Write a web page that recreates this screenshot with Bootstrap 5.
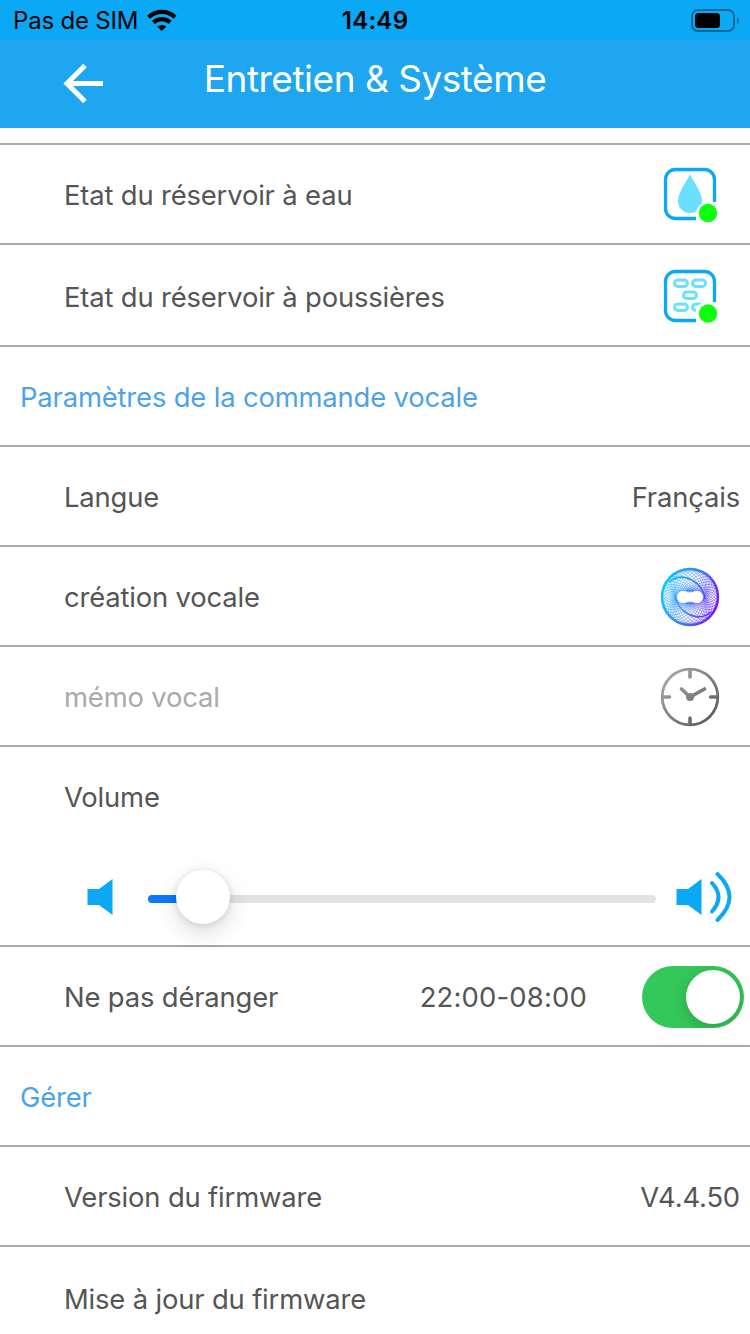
<!DOCTYPE html>
<html lang="fr">
<head>
    <meta charset="UTF-8">
    <meta name="viewport" content="width=device-width, initial-scale=1.0">
    <title>Entretien &amp; Système</title>
    <link href="https://cdn.jsdelivr.net/npm/bootstrap@5.3.3/dist/css/bootstrap.min.css" rel="stylesheet">
    <script src="https://cdn.jsdelivr.net/npm/bootstrap@5.3.3/dist/js/bootstrap.bundle.min.js"></script>
    <style>
        body { font-family: Inter, "Liberation Sans", sans-serif; font-size: 27.4px; line-height: 36px; letter-spacing: -.16px; color: #555; height: 1334px; overflow: hidden; }
        svg { display: block; flex: none; }
        .status-bar { height: 40px; background: #0ba8f6; color: #000; font-size: 24px; letter-spacing: -.2px; padding: 2px 11px 0 13px; }
        .status-bar .clock { font-weight: 600; letter-spacing: .3px; margin: 0 1px 0 -1px; }
        .title-bar { height: 88px; background: #1ea7f0; color: #fff; padding: 0 60px; }
        .title-bar h1 { font-size: 37px; font-weight: 400; letter-spacing: -.48px; margin: 0; padding-bottom: 9px; }
        .gap-strip { height: 17px; border-bottom: 2px solid #a9a9a9; }
        .setting { height: 100px; border: solid #a9a9a9; border-width: 0 0 2px; padding: 2px 10px 0 64px; color: inherit; }
        .setting.tall { height: 102px; padding-top: 4px; }
        .setting.section { padding-left: 20px; color: #4ca3e8; }
        .setting > span { padding-bottom: 1px; }
        .setting.off > span { color: #aaa; }
        .setting .hours { letter-spacing: .2px; }
        .setting.volume { height: 200px; padding: 0; }
        .volume .caption { height: 100px; padding: 0 0 0 64px; }
        .volume .controls { height: 98px; padding: 0 16px 0 86px; }
        .volume svg { margin-top: 2px; }
        .tile, .disc { margin-right: 20px; }
        .track { width: 508px; height: 8px; border-radius: 4px; background: #e3e3e5; margin: 5px 20px 0 34px; }
        .track .fill { height: 8px; border-radius: 4px; background: #0a7aff; }
        .track .thumb { width: 54px; height: 54px; top: -25px; background: #fff; box-shadow: 0 1px 6px rgba(0,0,0,.12), 0 8px 24px rgba(0,0,0,.15); }
        .toggle { width: 102px; height: 62px; border-radius: 31px; background: #34c85a; padding: 4px; overflow: hidden; margin: 0 -4px 0 55px; }
        .toggle .knob { width: 54px; height: 54px; background: #fff; box-shadow: 0 4px 16px rgba(0,0,0,.2); }
    </style>
</head>
<body class="bg-white">
<div class="status-bar d-flex align-items-center">
    <div class="col d-flex align-items-center">
        <span>Pas de SIM</span>
        <svg class="ms-2" width="32" height="24" viewBox="0 0 32 24">
            <g fill="none" stroke="#000" stroke-width="4.2">
                <path d="M2.6 8.3a19 19 0 0 1 26.4 0"/>
                <path d="M7.4 13.5a12 12 0 0 1 16.8 0"/>
            </g>
            <path d="M11.2 17.6a7 7 0 0 1 9.2 0L15.8 22z"/>
        </svg>
    </div>
    <div class="clock">14:49</div>
    <div class="col d-flex justify-content-end">
        <svg width="48" height="24" viewBox="0 0 48 24">
            <rect x="1" y="1" width="42" height="21" rx="6" fill="none" stroke="#07699a" stroke-width="2"/>
            <rect x="4" y="4" width="25" height="15" rx="3.5"/>
            <path d="M46 8v7q2-1 2-3.500t-2-3.500z" fill="#07699a"/>
        </svg>
    </div>
</div>
<div class="title-bar d-flex align-items-center">
    <div class="col">
        <svg width="44" height="44" viewBox="0 0 44 44" fill="none" stroke="#fff" stroke-width="5">
            <path d="M25 3.500 7 21.500l18 18M7 21.500h36"/>
        </svg>
    </div>
    <h1 class="text-nowrap">Entretien &amp; Système</h1>
    <div class="col"></div>
</div>
<div class="gap-strip"></div>

<div class="list-group rounded-0">
    <div class="list-group-item setting d-flex align-items-center">
        <span class="me-auto">Etat du réservoir à eau</span>
        <svg class="tile" width="60" height="60" viewBox="0 0 60 60">
            <rect x="5.500" y="4.500" width="49" height="49" rx="10" fill="none" stroke="#0ba8f6" stroke-width="3.300"/>
            <path d="M30 9C26 18 18 27 18 36a12 12 0 0 0 24 0C42 27 34 18 30 9z" fill="#69e0ff"/>
            <path d="M60 37H48a12 12 0 0 0-12 12v11h24z" fill="#fff"/>
            <circle cx="48" cy="48" r="9.200" fill="#0dff0d"/>
        </svg>
    </div>
    <div class="list-group-item setting tall d-flex align-items-center">
        <span class="me-auto">Etat du réservoir à poussières</span>
        <svg class="tile" width="60" height="60" viewBox="0 0 60 60">
            <rect x="5.500" y="4.500" width="49" height="49" rx="10" fill="none" stroke="#0ba8f6" stroke-width="3.300"/>
            <g fill="none" stroke="#69e0ff" stroke-width="3">
                <rect x="14.500" y="13" width="13" height="6.500" rx="3.200"/>
                <rect x="32.500" y="13" width="13" height="6.500" rx="3.200"/>
                <rect x="23.500" y="25" width="13" height="6.500" rx="3.200"/>
                <rect x="14.500" y="37" width="13" height="6.500" rx="3.200"/>
                <rect x="32.500" y="37" width="13" height="6.500" rx="3.200"/>
            </g>
            <path d="M60 35H46a10 10 0 0 0-10 12v13h24z" fill="#fff"/>
            <circle cx="48" cy="46.500" r="9.200" fill="#0dff0d"/>
        </svg>
    </div>
    <div class="list-group-item setting section d-flex align-items-center">
        <span>Paramètres de la commande vocale</span>
    </div>
    <div class="list-group-item setting d-flex align-items-center">
        <span class="me-auto">Langue</span>
        <span>Français</span>
    </div>
    <div class="list-group-item setting d-flex align-items-center">
        <span class="me-auto">création vocale</span>
        <svg class="disc" width="60" height="60" viewBox="-30 -30 60 60" fill="none" stroke="url(#voiceGrad)">
            <defs>
                <linearGradient id="voiceGrad" gradientUnits="userSpaceOnUse" x1="-28" y1="-10" x2="28" y2="10">
                    <stop offset="0" stop-color="#12c4ff"/>
                    <stop offset=".5" stop-color="#3b80f5"/>
                    <stop offset="1" stop-color="#7a14f5"/>
                </linearGradient>
            </defs>
            <path id="swirl" stroke-width=".5"/>
            <circle r="28" stroke-width="2.400"/>
            <path d="M-21-15C-6-27 13-14 15 2M21 15C6 27-13 14-15-2" stroke-width="1.500"/>
            <path d="M-7-6.500C-4-6.500-3-5 0-5S4-6.500 7-6.500A6.500 6.500 0 0 1 7 6.500C4 6.500 3 5 0 5S-4 6.500-7 6.500A6.500 6.500 0 0 1-7-6.500z" fill="#fff" stroke-width=".5"/>
        </svg>
    </div>
    <div class="list-group-item setting off d-flex align-items-center">
        <span class="me-auto">mémo vocal</span>
        <svg class="disc" width="60" height="60" viewBox="-30 -30 60 60" fill="none" stroke="url(#clockGrad)" stroke-width="3.600" stroke-linecap="round">
            <defs>
                <linearGradient id="clockGrad" gradientUnits="userSpaceOnUse" x1="-20" y1="-20" x2="20" y2="20">
                    <stop offset="0" stop-color="#a0a0a0"/>
                    <stop offset="1" stop-color="#626262"/>
                </linearGradient>
            </defs>
            <circle r="27.800" stroke-width="2.800"/>
            <path d="M.01-26 0-20M.01 26 0 21M-26 .01-20.500 0M26 .01 20.500 0M-8.500-8 0 0 14.500-8"/>
            <circle r="2.200"/>
        </svg>
    </div>
    <div class="list-group-item setting volume">
        <div class="caption d-flex align-items-center">Volume</div>
        <div class="controls d-flex align-items-center">
            <svg width="28" height="40" viewBox="0 0 28 40" fill="#0ba8f6">
                <path d="M1.500 12h11.500L26.500 2v36L13 28H1.500z"/>
            </svg>
            <div class="track position-relative">
                <div class="fill" style="width: 11%"></div>
                <div class="thumb rounded-circle position-absolute translate-middle-x" style="left: 10.8%"></div>
            </div>
            <svg width="58" height="52" viewBox="0 0 58 52" fill="#0ba8f6">
                <path d="M.500 18H12L25.500 8v36L12 34H.500z"/>
                <path d="M36 12q13 14 0 28.500M41.500 3q24 23 0 46" fill="none" stroke="#0ba8f6" stroke-width="4" stroke-linecap="round"/>
            </svg>
        </div>
    </div>
    <div class="list-group-item setting d-flex align-items-center">
        <span class="me-auto">Ne pas déranger</span>
        <span class="hours">22:00-08:00</span>
        <div class="toggle d-flex justify-content-end"><div class="knob rounded-circle"></div></div>
    </div>
    <div class="list-group-item setting section d-flex align-items-center">
        <span>Gérer</span>
    </div>
    <div class="list-group-item setting d-flex align-items-center">
        <span class="me-auto">Version du firmware</span>
        <span>V4.4.50</span>
    </div>
    <div class="list-group-item setting tall d-flex align-items-center">
        <span class="me-auto">Mise à jour du firmware</span>
    </div>
</div>
<script>
// strands leave the opening along its edge and wind out to the rim, both ways round
function opening(t) {
    return [12.5 * Math.cos(t), 6 * Math.sin(t)];
}

let d = '';
for (const dir of [1, -1]) {
    for (let i = 0; i < 44; i++) {
        const t = (i + .5) * Math.PI / 22;
        const [x, y] = opening(t);
        const [nx, ny] = opening(t + dir * .05);
        const len = Math.hypot(nx - x, ny - y);
        const end = t + dir * 2;
        const ex = 28 * Math.cos(end), ey = 28 * Math.sin(end);
        d += `M${x} ${y}C${x + (nx - x) / len * 12} ${y + (ny - y) / len * 12} ` +
            `${ex + dir * Math.sin(end) * 14} ${ey - dir * Math.cos(end) * 14} ${ex} ${ey}`;
    }
}
document.getElementById('swirl').setAttribute('d', d);
</script>
</body>
</html>
